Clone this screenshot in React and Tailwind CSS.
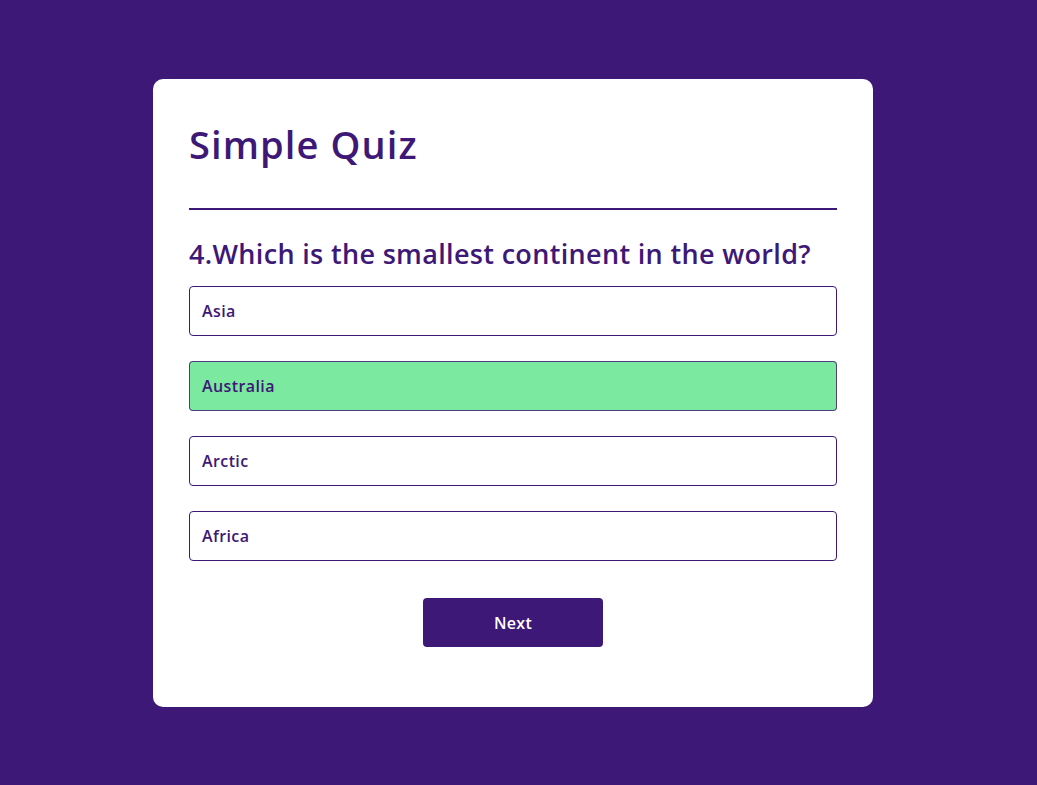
import React, { useState } from 'react';

const answers = [
  { text: 'Asia', correct: false },
  { text: 'Australia', correct: true },
  { text: 'Arctic', correct: false },
  { text: 'Africa', correct: false },
];

const App = () => {
  const [picked] = useState(1);

  return (
    <div className="min-h-[785px] bg-[#3d1876] pt-[79px] pb-[78px]" style={{ fontFamily: '"Open Sans", "Noto Sans", sans-serif' }}>
      <div className="ml-[153px] w-[720px] bg-white rounded-[10px] px-9 pt-[38px] pb-[60px]">
        <h1 className="text-[38px] font-semibold text-[#3d1876] leading-[54px] tracking-[1.1px]">Simple Quiz</h1>

        <div className="mt-[37px] pt-[26px] border-t-2 border-[#3d1876]">
          <h2 className="text-[27px] font-semibold text-[#3d1876] leading-[36px] tracking-[0.33px]">
            4.Which is the smallest continent in the world?
          </h2>

          {/* Answers */}
          <div className="mt-[14px] flex flex-col gap-[25px]">
            {answers.map((a, i) => (
              <button
                key={a.text}
                className={`w-full h-[50px] text-left px-3 rounded-[4px] border text-[16px] font-semibold tracking-[0.4px] text-[#3d1876] ${picked === i && a.correct ? 'bg-[#7be9a0] border-[#3d1876]/80' : 'bg-white border-[#3d1876]'}`}
              >
                {a.text}
              </button>
            ))}
          </div>

          <button className="block mx-auto mt-[37px] w-[180px] h-[49px] rounded-[4px] bg-[#3d1876] text-white text-[16px] font-semibold tracking-[0.3px]">
            Next
          </button>
        </div>
      </div>
    </div>
  );
};

export default App;
